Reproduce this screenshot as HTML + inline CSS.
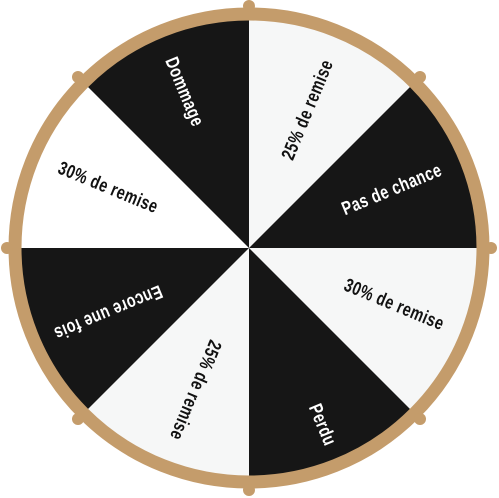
<!DOCTYPE html>
<html><head><meta charset="utf-8"><style>
html,body{margin:0;padding:0;background:#fff;width:499px;height:498px;overflow:hidden}
.w{position:relative;width:499px;height:498px}
svg{position:absolute;left:0;top:0}
.t{position:absolute;white-space:nowrap;font-family:"Liberation Sans Narrow","Liberation Sans",sans-serif;font-weight:bold;font-size:19px;letter-spacing:0.6px;transform-origin:50% 50%;line-height:1}
.d{color:#fff}.l{color:#111}
</style></head><body><div class="w">
<svg width="499" height="498" viewBox="0 0 499 498">
<g transform="translate(249,248)">
<path d="M0 0 L0 -234 A234 234 0 0 1 165.5 -165.5 Z" fill="#f6f7f7"/>
<path d="M0 0 L165.5 -165.5 A234 234 0 0 1 234 0 Z" fill="#161616"/>
<path d="M0 0 L234 0 A234 234 0 0 1 165.5 165.5 Z" fill="#f6f7f7"/>
<path d="M0 0 L165.5 165.5 A234 234 0 0 1 0 234 Z" fill="#161616"/>
<path d="M0 0 L0 234 A234 234 0 0 1 -165.5 165.5 Z" fill="#f6f7f7"/>
<path d="M0 0 L-165.5 165.5 A234 234 0 0 1 -234 0 Z" fill="#161616"/>
<path d="M0 0 L-234 0 A234 234 0 0 1 -165.5 -165.5 Z" fill="#ffffff"/>
<path d="M0 0 L-165.5 -165.5 A234 234 0 0 1 0 -234 Z" fill="#161616"/>
<circle r="234" fill="none" stroke="#c49c6b" stroke-width="13"/>
<g fill="#c49c6b">
<circle cx="0" cy="-242" r="6"/><circle cx="171" cy="-171" r="6"/>
<circle cx="242" cy="0" r="6"/><circle cx="171" cy="171" r="6"/>
<circle cx="0" cy="242" r="6"/><circle cx="-171" cy="171" r="6"/>
<circle cx="-242" cy="0" r="6"/><circle cx="-171" cy="-171" r="6"/>
</g></g></svg>
<div class="t d" style="left:184px;top:92px;transform:translate(-50%,-50%) rotate(67.5deg) scaleX(0.76)">Dommage</div>
<div class="t l" style="left:308px;top:110px;transform:translate(-50%,-50%) rotate(-67.5deg) scaleX(0.76)">25% de remise</div>
<div class="t d" style="left:392px;top:190px;transform:translate(-50%,-50%) rotate(-22.5deg) scaleX(0.76)">Pas de chance</div>
<div class="t l" style="left:394px;top:305px;transform:translate(-50%,-50%) rotate(22.5deg) scaleX(0.76)">30% de remise</div>
<div class="t d" style="left:322px;top:425px;transform:translate(-50%,-50%) rotate(67.5deg) scaleX(0.76)">Perdu</div>
<div class="t l" style="left:195px;top:390px;transform:translate(-50%,-50%) rotate(112.5deg) scaleX(0.76)">25% de remise</div>
<div class="t d" style="left:108px;top:312px;transform:translate(-50%,-50%) rotate(157.5deg) scaleX(0.76)">Encore une fois</div>
<div class="t l" style="left:108px;top:188px;transform:translate(-50%,-50%) rotate(22.5deg) scaleX(0.76)">30% de remise</div>
</div></body></html>
